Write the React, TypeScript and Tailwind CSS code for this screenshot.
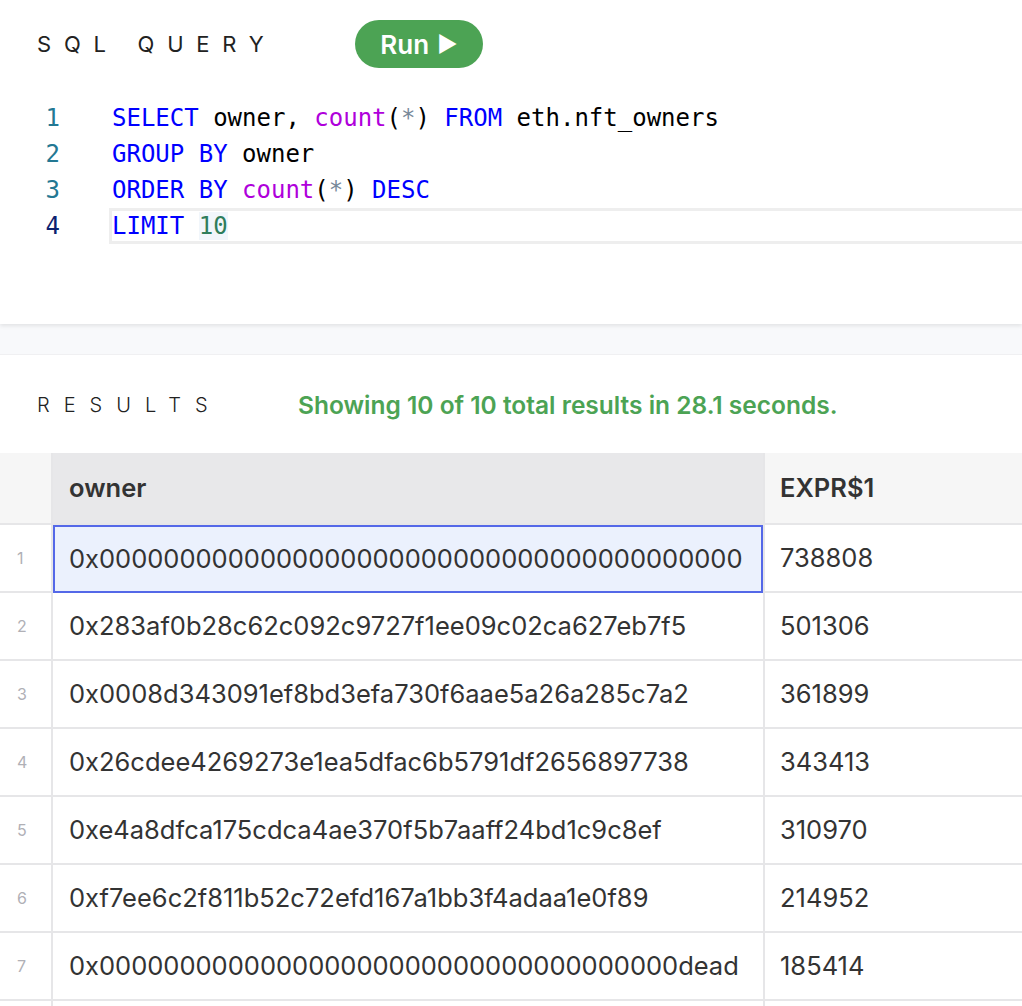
import React from "react";

const SANS = "font-['Inter','Noto_Sans',sans-serif]";
const MONO = "font-['DejaVu_Sans_Mono','Liberation_Mono',monospace]";

type Tok = { t: string; c?: string };

const KW = "text-[#0000ff]";
const FN = "text-[#af00db]";
const OP = "text-[#778899]";
const NUM = "text-[#2e7d5b]";

const LINES: Tok[][] = [
  [
    { t: "SELECT", c: KW },
    { t: " owner, " },
    { t: "count", c: FN },
    { t: "(" },
    { t: "*", c: OP },
    { t: ") " },
    { t: "FROM", c: KW },
    { t: " eth.nft_owners" },
  ],
  [{ t: "GROUP BY", c: KW }, { t: " owner" }],
  [
    { t: "ORDER BY", c: KW },
    { t: " " },
    { t: "count", c: FN },
    { t: "(" },
    { t: "*", c: OP },
    { t: ") " },
    { t: "DESC", c: KW },
  ],
  [{ t: "LIMIT", c: KW }, { t: " " }, { t: "10", c: NUM + " bg-[#f1f6fb]" }],
];

const ROWS: [string, string][] = [
  ["0x0000000000000000000000000000000000000000", "738808"],
  ["0x283af0b28c62c092c9727f1ee09c02ca627eb7f5", "501306"],
  ["0x0008d343091ef8bd3efa730f6aae5a26a285c7a2", "361899"],
  ["0x26cdee4269273e1ea5dfac6b5791df2656897738", "343413"],
  ["0xe4a8dfca175cdca4ae370f5b7aaff24bd1c9c8ef", "310970"],
  ["0xf7ee6c2f811b52c72efd167a1bb3f4adaa1e0f89", "214952"],
  ["0x000000000000000000000000000000000000dead", "185414"],
];

export default function App() {
  return (
    <div className={`w-[1022px] h-[1006px] overflow-hidden bg-white ${SANS}`}>
      {/* Editor */}
      <div className="relative z-10 bg-white pt-5 h-[324px] shadow-[0_2px_4px_rgba(0,0,0,0.09)]">
        <div className="flex items-center h-12">
          <div className="w-[355px] pl-[37px] text-[22px] font-normal tracking-[0.58em] text-[#222]">
            SQL QUERY
          </div>
          <button
            type="button"
            className="h-12 w-32 rounded-full bg-[#4ca354] text-white text-[26px] font-semibold flex items-center justify-center gap-2"
          >
            Run <span className="text-[22px]">▶</span>
          </button>
        </div>

        <div className={`mt-8 ${MONO} text-[24px]`}>
          {LINES.map((line, i) => {
            const active = i === LINES.length - 1;
            return (
              <div key={i} className="flex h-9">
                <div
                  className={`w-[60px] text-right leading-9 ${
                    active ? "text-[#0b216f]" : "text-[#237893]"
                  }`}
                >
                  {i + 1}
                </div>
                <div
                  className={`ml-[49px] flex-1 border-[3px] border-r-0 leading-[30px] whitespace-pre ${
                    active ? "border-[#eeeeee]" : "border-transparent"
                  }`}
                >
                  {line.map((tok, j) => (
                    <span key={j} className={tok.c ?? "text-black"}>
                      {tok.t}
                    </span>
                  ))}
                </div>
              </div>
            );
          })}
        </div>
      </div>

      <div className="h-[31px] bg-[#f8f9fb] border-b border-[#f0f0f2]" />

      {/* Results */}
      <div className="pt-[35px]">
        <div className="flex items-center h-[30px]">
          <div className="w-[298px] pl-[37px] text-[20px] font-light tracking-[0.7em] text-[#222]">
            RESULTS
          </div>
          <div className="text-[24.5px] font-semibold text-[#4ca354]">
            Showing 10 of 10 total results in 28.1 seconds.
          </div>
        </div>

        <div className="mt-[33px] grid grid-cols-[53px_710px_1fr] text-[#333]">
          <div className="h-[72px] bg-[#f6f6f6] border-r-2 border-b-2 border-[#e6e6e8]" />
          <div className="h-[72px] bg-[#e8e8ea] border-b-2 border-[#e6e6e8] flex items-center pl-[16px] text-[25.5px] font-semibold">
            owner
          </div>
          <div className="h-[72px] bg-[#f6f6f6] border-l-2 border-b-2 border-[#e6e6e8] flex items-center pl-[15px] text-[25.5px] font-semibold">
            EXPR$1
          </div>

          {ROWS.map(([owner, count], i) => (
            <React.Fragment key={i}>
              <div className="h-[68px] border-r-2 border-b-2 border-[#e6e6e8] flex items-center pl-[17px] text-[16px] text-[#b0b0b6]">
                {i + 1}
              </div>
              <div
                className={`h-[68px] flex items-center text-[25.5px] whitespace-nowrap ${
                  i === 0
                    ? "pl-[14px] bg-[#ebf1fd] border-2 border-[#5468e8]"
                    : "pl-[16px] border-b-2 border-[#e6e6e8]"
                }`}
              >
                {owner}
              </div>
              <div className="h-[68px] border-l-2 border-b-2 border-[#e6e6e8] flex items-center pl-[15px] text-[25.5px]">
                {count}
              </div>
            </React.Fragment>
          ))}
          <div className="h-[68px] border-r-2 border-[#e6e6e8]" />
          <div className="h-[68px]" />
          <div className="h-[68px] border-l-2 border-[#e6e6e8]" />
        </div>
      </div>
    </div>
  );
}
